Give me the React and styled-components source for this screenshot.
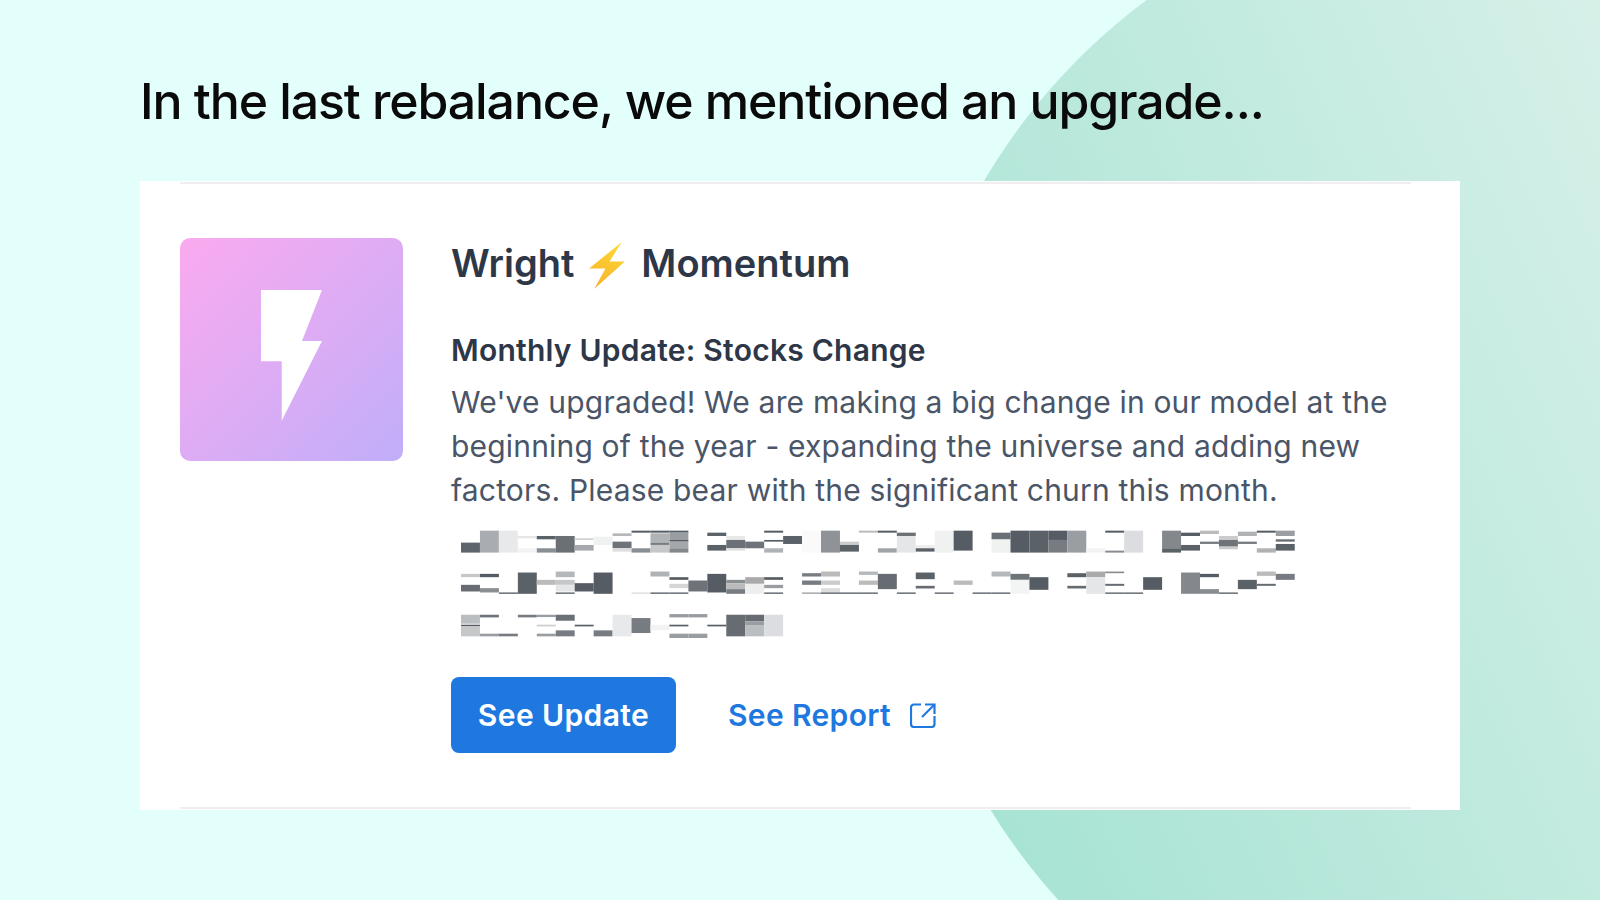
import React from "react";
import styled, { createGlobalStyle } from "styled-components";

const GlobalStyle = createGlobalStyle`
  body {
    margin: 0;
    font-family: "Inter", "Liberation Sans", sans-serif;
  }
`;

// pixelated redaction: [column, top, bottom, colour]
const MOSAIC = [
  // first line
  [0, 68, 98, "#5e656b"], [1, 32, 98, "#a9adb1"], [2, 32, 98, "#e8e9ea"], [3, 48, 55, "#e5e5e5"], [3, 85, 98, "#f3f3f3"],
  [4, 48, 58, "#5a6167"], [4, 85, 98, "#8a8f94"], [5, 48, 98, "#6a7075"], [6, 55, 60, "#d0d0d0"], [6, 75, 92, "#a5a9ad"],
  [7, 50, 75, "#f0f1f1"], [8, 40, 48, "#b5b8bb"], [8, 65, 85, "#6d7378"], [8, 85, 95, "#dddddd"], [9, 32, 38, "#555c63"],
  [9, 85, 98, "#8a8f94"], [10, 32, 38, "#555c63"], [10, 40, 68, "#b0b3b6"], [10, 68, 75, "#777c82"], [10, 75, 98, "#c5c7c9"],
  [11, 32, 38, "#555c63"], [11, 38, 60, "#9a9ea2"], [11, 60, 65, "#555c63"], [11, 65, 85, "#a5a8ab"], [11, 85, 98, "#84888c"],
  [13, 38, 48, "#5a6167"], [13, 75, 92, "#5a6167"], [14, 48, 60, "#e8e8e8"], [14, 60, 85, "#6a7075"], [14, 85, 92, "#dddddd"],
  [15, 65, 85, "#6d7378"], [16, 32, 38, "#555c63"], [16, 60, 65, "#555c63"], [16, 85, 98, "#b0b3b6"], [17, 48, 72, "#5a6167"],
  [18, 32, 98, "#fafafa"], [19, 32, 98, "#8f9397"], [20, 65, 75, "#cccccc"], [20, 75, 95, "#5a6167"], [21, 32, 38, "#bbbbbb"],
  [22, 32, 38, "#555c63"], [22, 85, 98, "#a0a4a8"], [23, 38, 48, "#6a7075"], [23, 48, 98, "#e5e6e7"], [24, 75, 85, "#eeeeee"],
  [24, 85, 95, "#5a6167"], [25, 32, 98, "#f0f1f1"], [26, 32, 92, "#555c63"], [28, 38, 58, "#6a7075"], [28, 60, 98, "#f0f1f1"],
  [29, 32, 98, "#555c63"], [30, 32, 98, "#5a6167"], [31, 32, 60, "#555c63"], [31, 60, 98, "#777c82"], [32, 32, 98, "#9a9ea2"],
  [33, 85, 98, "#f3f3f3"], [34, 32, 38, "#555c63"], [34, 92, 98, "#888c90"], [35, 32, 98, "#dcdde0"], [37, 32, 85, "#84888c"],
  [37, 85, 98, "#5a6167"], [38, 38, 48, "#555c63"], [38, 75, 92, "#5a6167"], [39, 32, 42, "#bbbbbb"], [39, 65, 72, "#777c82"],
  [40, 48, 60, "#cccccc"], [40, 60, 80, "#6d7378"], [40, 80, 88, "#cccccc"], [41, 35, 48, "#b0b3b6"], [41, 65, 72, "#777c82"],
  [42, 32, 38, "#555c63"], [42, 85, 98, "#b0b3b6"], [43, 32, 48, "#9a9ea2"], [43, 58, 65, "#666c72"], [43, 72, 92, "#5a6167"],
  // second line
  [0, 162, 172, "#c5c7c9"], [0, 195, 215, "#666c72"], [1, 162, 172, "#555c63"], [1, 205, 218, "#8a8f94"], [2, 218, 222, "#555c63"],
  [3, 158, 222, "#5a6167"], [4, 180, 195, "#bbbbbb"], [5, 155, 172, "#b5b8bb"], [5, 180, 195, "#c5c7c9"], [5, 195, 215, "#e5e6e7"],
  [5, 218, 222, "#555c63"], [6, 190, 215, "#555c63"], [7, 158, 222, "#555c63"], [9, 218, 222, "#dddddd"], [10, 155, 170, "#b0b3b6"],
  [10, 218, 222, "#555c63"], [11, 172, 180, "#555c63"], [11, 192, 205, "#d5d6d8"], [11, 218, 222, "#555c63"], [12, 182, 215, "#6d7378"],
  [13, 162, 218, "#555c63"], [14, 180, 190, "#8a8f94"], [14, 190, 208, "#bbbbbb"], [14, 208, 222, "#777c82"], [15, 172, 192, "#aaaaaa"],
  [15, 192, 222, "#eeeeee"], [16, 172, 180, "#555c63"], [16, 195, 205, "#999da1"], [16, 218, 222, "#555c63"], [18, 160, 170, "#777c82"],
  [18, 182, 195, "#777c82"], [18, 218, 222, "#999da1"], [19, 155, 170, "#bbbbbb"], [19, 182, 195, "#cccccc"], [19, 205, 218, "#dddddd"],
  [19, 218, 222, "#555c63"], [20, 218, 222, "#555c63"], [21, 155, 165, "#b5b8bb"], [21, 182, 195, "#bbbbbb"], [21, 218, 222, "#555c63"],
  [22, 162, 208, "#666c72"], [23, 218, 222, "#555c63"], [24, 158, 178, "#5a6167"], [24, 198, 206, "#666c72"], [25, 218, 222, "#555c63"],
  [26, 182, 195, "#bbbbbb"], [27, 218, 222, "#555c63"], [28, 155, 170, "#b5b8bb"], [28, 218, 222, "#555c63"], [29, 162, 180, "#6d7378"],
  [29, 180, 222, "#f3f5f5"], [30, 172, 210, "#555c63"], [32, 160, 172, "#5a6167"], [32, 198, 206, "#666c72"], [33, 155, 172, "#aaaaaa"],
  [33, 172, 222, "#e5e6e7"], [34, 155, 160, "#888c90"], [34, 192, 198, "#666c72"], [34, 218, 222, "#555c63"], [35, 218, 222, "#555c63"],
  [36, 172, 210, "#555c63"], [38, 158, 222, "#84888c"], [39, 162, 172, "#555c63"], [39, 208, 222, "#888c90"], [40, 218, 222, "#555c63"],
  [41, 180, 208, "#5a6167"], [42, 155, 168, "#bbbbbb"], [42, 192, 198, "#666c72"], [43, 162, 180, "#777c82"],
  // third line
  [0, 285, 312, "#bbbec1"], [0, 315, 320, "#555c63"], [0, 320, 350, "#c5c7c9"], [1, 285, 293, "#6d7378"], [1, 342, 350, "#999da1"],
  [2, 342, 350, "#777c82"], [3, 285, 293, "#777c82"], [4, 285, 292, "#999da1"], [4, 315, 320, "#cccccc"], [4, 342, 350, "#999da1"],
  [5, 285, 303, "#6a7075"], [5, 332, 350, "#777c82"], [6, 315, 320, "#555c63"], [7, 332, 350, "#777c82"], [8, 285, 350, "#e8e9ea"],
  [9, 295, 340, "#777c82"], [10, 315, 332, "#f3f3f3"], [11, 283, 293, "#999da1"], [11, 315, 320, "#555c63"], [11, 342, 355, "#999da1"],
  [12, 283, 293, "#999da1"], [12, 342, 355, "#999da1"], [13, 315, 320, "#555c63"], [14, 285, 350, "#666c72"], [15, 285, 305, "#666c72"],
  [15, 305, 316, "#999da1"], [15, 316, 350, "#bbbec1"], [16, 285, 350, "#dcdde0"],
];

export default function App() {
  return (
    <Page>
      <GlobalStyle />
      <Heading>In the last rebalance, we mentioned an upgrade...</Heading>
      <Card>
        <CardInner>
          <LogoTile>
            <svg width="61" height="131" viewBox="0 0 61 131">
              <polygon points="0,0 61,0 41,51 61,51 20.7,130.7 20.7,71.3 0,71.3" fill="#fff" />
            </svg>
          </LogoTile>
          <Details>
            <Title>
              Wright
              <VoltIcon width="37" height="48" viewBox="0 0 36 47">
                <defs>
                  <linearGradient id="volt" x1="0.7" y1="0" x2="0.3" y2="1">
                    <stop offset="0" stopColor="#fdd835" />
                    <stop offset="1" stopColor="#f7b32b" />
                  </linearGradient>
                </defs>
                <polygon points="32,0 0,26 16,26 5,46 35,19 20,19" fill="url(#volt)" />
              </VoltIcon>
              Momentum
            </Title>
            <Subtitle>Monthly Update: Stocks Change</Subtitle>
            <Body>
              We've upgraded! We are making a big change in our model at the
              beginning of the year - expanding the universe and adding new
              factors. Please bear with the significant churn this month.
            </Body>
            <Mosaic viewBox="0 30 2478 325" preserveAspectRatio="none">
              {MOSAIC.map(([col, top, bottom, fill], i) => (
                <rect key={i} x={col * 56.3} y={top} width="56.3" height={bottom - top} fill={fill} />
              ))}
            </Mosaic>
            <Actions>
              <PrimaryButton>See Update</PrimaryButton>
              <ReportLink>
                See Report
                <svg width="26" height="25" viewBox="0 0 26 25" fill="none" stroke="currentColor" strokeWidth="2.2">
                  <path d="M11 1.5H4a3 3 0 0 0-3 3V21a3 3 0 0 0 3 3h17.5a3 3 0 0 0 3-3v-8" />
                  <path d="M15 1.5h9.5V11" />
                  <path d="M24.5 1.5 12 14" />
                </svg>
              </ReportLink>
            </Actions>
          </Details>
        </CardInner>
      </Card>
    </Page>
  );
}

const Page = styled.div`
  width: 1600px;
  height: 900px;
  box-sizing: border-box;
  overflow: hidden;
  padding: 0 140px;
  background:
    radial-gradient(circle at 1510px 490px, transparent 609.5px, #e2fffb 610.5px),
    linear-gradient(66deg, #a6e3d3 50%, #d6f0e8 100%);
`;
const Heading = styled.h1`
  margin: 0;
  height: 181px;
  padding-top: 70px;
  box-sizing: border-box;
  font-size: 50px;
  line-height: 62px;
  font-weight: 500;
  letter-spacing: -1.1px;
  color: #0a0a0a;
  white-space: nowrap;
`;
const Card = styled.section`
  height: 629px;
  background: #fff;
  padding: 1px 49px 1px 40px;
  box-sizing: border-box;
`;
const CardInner = styled.div`
  height: 100%;
  box-sizing: border-box;
  display: flex;
  gap: 48px;
  padding-top: 54px;
  border-top: 2px solid #efefef;
  border-bottom: 2px solid #efefef;
`;
const LogoTile = styled.div`
  width: 223px;
  height: 223px;
  flex: none;
  box-sizing: border-box;
  padding-top: 12px;
  display: flex;
  align-items: center;
  justify-content: center;
  border-radius: 10px;
  background: linear-gradient(135deg, #fbaaef 0%, #c0aef9 100%);
`;
const Details = styled.div`
  flex: 1;
  display: flex;
  flex-direction: column;
  align-items: flex-start;
`;
const Title = styled.h2`
  margin: 0;
  height: 50px;
  display: flex;
  align-items: center;
  gap: 15px;
  font-size: 38px;
  line-height: 50px;
  font-weight: 600;
  color: #2d3748;
`;
const VoltIcon = styled.svg`
  margin-top: 6px;
`;
const Subtitle = styled.h3`
  margin: 42px 0 0;
  font-size: 30px;
  line-height: 40px;
  font-weight: 600;
  letter-spacing: 0.24px;
  color: #2d3748;
`;
const Body = styled.p`
  margin: 10px 0 0;
  font-size: 30px;
  line-height: 44px;
  font-weight: 400;
  letter-spacing: 0.18px;
  color: #4a5568;
`;
const Mosaic = styled.svg`
  display: block;
  width: 834px;
  height: 108px;
  margin: 18px 0 0 10px;
  filter: blur(0.6px);
`;
const Actions = styled.div`
  display: flex;
  align-items: center;
  gap: 52px;
  margin-top: 39px;
`;
const PrimaryButton = styled.button`
  width: 225px;
  height: 76px;
  border: none;
  border-radius: 8px;
  background: #1e78e0;
  color: #fff;
  font-family: inherit;
  font-size: 30px;
  font-weight: 600;
  letter-spacing: 0.4px;
`;
const ReportLink = styled.a`
  display: flex;
  align-items: center;
  gap: 19px;
  font-size: 30px;
  font-weight: 600;
  letter-spacing: 0.35px;
  color: #1e78e0;
`;
